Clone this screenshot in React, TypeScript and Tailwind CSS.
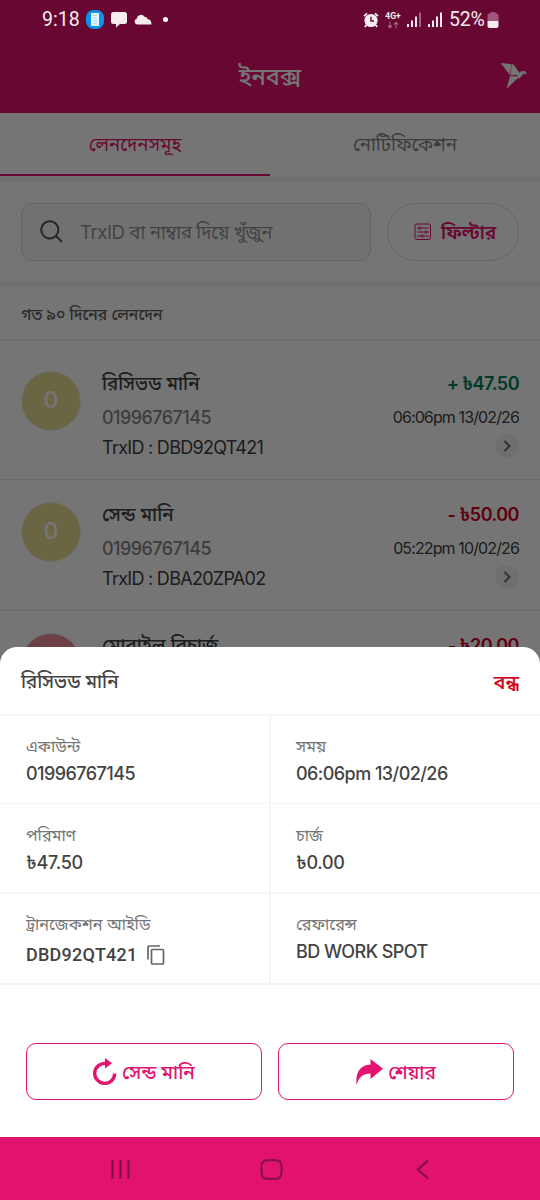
import type { ReactNode } from "react";

const transactions = [
  {
    title: "রিসিভড মানি",
    account: "01996767145",
    trxId: "DBD92QT421",
    amount: "+ ৳47.50",
    time: "06:06pm 13/02/26",
    initial: "0",
    avatar: "bg-[#e6df92]",
    color: "text-[#00805c]",
  },
  {
    title: "সেন্ড মানি",
    account: "01996767145",
    trxId: "DBA20ZPA02",
    amount: "- ৳50.00",
    time: "05:22pm 10/02/26",
    initial: "0",
    avatar: "bg-[#e6df92]",
    color: "text-[#d0021b]",
  },
];

function StatusBar() {
  return (
    <div className="absolute inset-x-0 top-0 z-20 flex h-[39px] items-center pr-[41px] pl-[42px] font-[Roboto] text-[19.5px] text-[#f5ecf0]">
      <span className="w-[38px] leading-[38px] whitespace-nowrap">9:18</span>
      <svg className="ml-[6px]" width="18" height="19" viewBox="0 0 18 19">
        <rect width="18" height="19" rx="7.5" fill="#0b93ee" />
        <path d="M5 3h8v13H5z" fill="#e8f6ff" />
        <path d="M7 5.500h4M7 8h4M7 10.500h4M7 13h4" stroke="#9ed4f8" />
      </svg>
      <svg className="ml-[7px]" width="16" height="16" viewBox="0 0 16 16" fill="currentColor">
        <path d="M2.500 0h11A2.500 2.500 0 0 1 16 2.500v7a2.500 2.500 0 0 1-2.500 2.500H9l-4 3.500V12H2.500A2.500 2.500 0 0 1 0 9.500v-7A2.500 2.500 0 0 1 2.500 0Z" />
      </svg>
      <svg className="ml-[7px]" width="18" height="11" viewBox="0 0 18 11" fill="currentColor">
        <path d="M3 10.500a3 3 0 0 1-.3-5.800A4.300 4.300 0 0 1 10.500 2.700a3.200 3.200 0 0 1 3.300 2.600c2.300.1 3.600 1.400 3.700 5.200Z" />
      </svg>
      <span className="ml-[11px] size-[5px] rounded-full bg-white" />

      <svg className="ml-auto" width="16" height="16" viewBox="0 0 16 16">
        <circle cx="8" cy="8.500" r="6.600" fill="currentColor" />
        <path d="M1 4.200 4 1.300M15 4.200l-3-2.900M3.300 13l-1.500 2M12.700 13l1.500 2" stroke="currentColor" strokeWidth="1.800" />
        <path d="M8 4.800v4.200h3" fill="none" stroke="#680a31" strokeWidth="1.400" />
      </svg>
      <div className="ml-[6px] flex w-[16px] flex-col items-center pt-[1px]">
        <span className="text-[8.5px] leading-[9px] font-bold">4G+</span>
        <svg width="12" height="8" viewBox="0 0 12 8" fill="none" stroke="#a06a80" strokeWidth="1.100">
          <path d="M3 .5v6M.8 4.500 3 6.800l2.200-2.300M9 7.500v-6M6.800 3.500 9 1.200l2.200 2.300" />
        </svg>
      </div>
      <svg className="ml-[6px]" width="15" height="15" viewBox="0 0 15 15" fill="currentColor">
        <path d="M0 12h2v3H0zM4 8.500h2V15H4zM8 4.500h2V15H8z" />
        <path d="M12 .5h2V15h-2z" opacity=".4" />
      </svg>
      <svg className="ml-[6px]" width="15" height="15" viewBox="0 0 15 15" fill="currentColor">
        <path d="M0 12h2v3H0zM4 8.500h2V15H4zM8 4.500h2V15H8zM12 .5h2V15h-2z" />
      </svg>
      <span className="ml-[6px] w-[38px] leading-[38px] tracking-[-0.2px]">52%</span>
      <svg width="12" height="16" viewBox="0 0 12 16">
        <path d="M3.500 0h5v1.500H10a1.500 1.500 0 0 1 1.500 1.500v6H.5V3A1.500 1.500 0 0 1 2 1.500h1.500z" fill="#a0587a" />
        <path d="M.5 9h11v5a2 2 0 0 1-2 2h-7a2 2 0 0 1-2-2z" fill="currentColor" />
      </svg>
    </div>
  );
}

function Header() {
  return (
    <header className="relative flex h-[113px] justify-center bg-[#e2136e] pt-[57px]">
      <h1 className="text-[23.5px] leading-[40px] font-medium text-white">ইনবক্স</h1>
      <svg className="absolute top-[62px] right-[12px]" width="28" height="28" viewBox="0 0 28 28" fill="#f8fff8">
        <path d="M.8 1l10.500 1.200L9.800 13z" />
        <path d="M11.600 2.200l2 .3 7 10-10.200 1z" />
        <path d="M10 14l11 .6-5 3.200L6.500 26.800z" />
        <path d="M16.500 13.200l4.500-4 4-.3 2 3.300-3.200-.6-4.500 4.800z" />
      </svg>
    </header>
  );
}

function Search() {
  return (
    <div className="flex h-[100px] gap-4 px-[21px] pt-[21px]">
      <div className="flex h-[58px] w-[350px] items-center rounded-[11px] border border-[#dadada] bg-[#f7f7f7] pb-[1px] pl-[18px]">
        <svg width="23" height="23" viewBox="0 0 23 23" fill="none" stroke="#505050" strokeWidth="2">
          <circle cx="9.800" cy="9.800" r="8.600" />
          <path d="m16 16 6 6" />
        </svg>
        <span className="ml-[17px] pt-[3px] text-[18.6px] tracking-[-0.45px] whitespace-nowrap text-[#939393]">
          TrxID বা নাম্বার দিয়ে খুঁজুন
        </span>
      </div>
      <div className="flex h-[58px] w-[132px] items-center rounded-full border border-[#dadada] pb-[1px] pl-[26px] text-[#e2136e]">
        <svg width="18" height="18" viewBox="0 0 18 18" fill="none" stroke="currentColor" strokeWidth="1">
          <rect x="1" y="1" width="15.500" height="15.500" rx="2" />
          <path d="M3 5h2M7 5h8M3 9h7.500M13 9h2M3 13h4M9.500 13H15" />
          <circle cx="5.800" cy="5" r="1.200" />
          <circle cx="11.800" cy="9" r="1.200" />
          <circle cx="8.200" cy="13" r="1.200" />
        </svg>
        <span className="ml-[9px] pt-[3px] text-[18.7px] font-semibold whitespace-nowrap">ফিল্টার</span>
      </div>
    </div>
  );
}

function Transaction({ item }: { item: (typeof transactions)[number] }) {
  return (
    <div className="flex h-[131px] border-b border-[#eaeaea] px-[21px]">
      <div
        className={`mt-[22px] flex size-[60px] items-center justify-center rounded-full border border-[#eee] pb-[1px] text-[23px] font-medium text-white ${item.avatar}`}
      >
        {item.initial}
      </div>
      <div className="ml-[21px] flex flex-1 flex-col pt-[20px] text-[18px]">
        <span className="text-[18.7px] leading-[30px] font-medium text-[#404040]">{item.title}</span>
        <span className="mt-[4px] leading-[30px] font-medium tracking-[-0.55px] text-[#858585]">{item.account}</span>
        <span className="leading-[30px] tracking-[-0.72px] text-[#404040]">TrxID : {item.trxId}</span>
      </div>
      <div className="flex flex-col items-end pt-[20px]">
        <span className={`text-[18px] leading-[30px] font-semibold tracking-[-0.5px] ${item.color}`}>{item.amount}</span>
        <span className="mt-[4px] text-[16px] leading-[28px] tracking-[-0.88px] text-[#404040]">{item.time}</span>
        <span className="mt-[3px] flex size-6 items-center justify-center rounded-full bg-[#f1f1f1]">
          <svg width="8" height="12" viewBox="0 0 8 12" fill="none" stroke="#707070" strokeWidth="2">
            <path d="m1.500 1 5 5-5 5" />
          </svg>
        </span>
      </div>
    </div>
  );
}

function Cell({ label, children }: { label: string; children: ReactNode }) {
  return (
    <div className="border-r-2 border-[#f5f5f5] pt-[18px] pl-[26px] even:border-r-0 even:pl-[25px]">
      <p className="text-[16.2px] leading-[24px] text-[#757575]">{label}</p>
      <div className="text-[18px] leading-[32px] font-medium tracking-[-0.55px] text-[#444]">{children}</div>
    </div>
  );
}

function DetailsSheet() {
  return (
    <section className="absolute inset-x-0 top-[647px] z-10 h-[490px] rounded-t-[17px] bg-white">
      <div className="flex h-[69px] items-center justify-between border-b-2 border-[#f5f5f5] px-[21px] pt-[4px] text-[18.7px] font-medium">
        <span className="text-[#444]">রিসিভড মানি</span>
        <span className="text-[19.5px] text-[#d0021b] [-webkit-text-stroke:0.2px]">বন্ধ</span>
      </div>
      <div className="grid h-[88px] grid-cols-[271px_1fr] border-b border-[#f5f5f5]">
        <Cell label="একাউন্ট">01996767145</Cell>
        <Cell label="সময়">06:06pm 13/02/26</Cell>
      </div>
      <div className="grid h-[90px] grid-cols-[271px_1fr] border-b-2 border-[#f5f5f5] pt-[1px]">
        <Cell label="পরিমাণ">
          <span className="tracking-[-0.3px]">৳47.50</span>
        </Cell>
        <Cell label="চার্জ">
          <span className="tracking-[-0.3px]">৳0.00</span>
        </Cell>
      </div>
      <div className="grid h-[91px] grid-cols-[271px_1fr] border-b-2 border-[#f5f5f5]">
        <Cell label="ট্রানজেকশন আইডি">
          <span className="flex items-center pt-[3px]">
            <span className="font-[Roboto] tracking-[0.25px]">DBD92QT421</span>
            <svg className="ml-[9px]" width="18" height="20" viewBox="0 0 18 20" fill="none" stroke="#666" strokeWidth="1.700">
              <rect x="4.500" y="4.500" width="12" height="14.500" rx="1" />
              <path d="M1 14.500V2a1 1 0 0 1 1-1h11" />
            </svg>
          </span>
        </Cell>
        <Cell label="রেফারেন্স">BD WORK SPOT</Cell>
      </div>
      <div className="mt-[58px] grid grid-cols-2 gap-4 px-[26px] text-[19px] font-medium text-[#e2136e]">
        <button className="flex h-[57px] items-center justify-center rounded-[10px] border-[1.5px] border-[#e2136e]">
          <svg width="24" height="27" viewBox="0 0 24 27">
            <path d="M13 5.500A10 10 0 1 0 21.700 15.500" fill="none" stroke="currentColor" strokeWidth="3.400" />
            <path d="m12 0 7 5.200-7 5.200z" fill="currentColor" />
          </svg>
          <span className="ml-[5px] pt-[4px]">সেন্ড মানি</span>
        </button>
        <button className="flex h-[57px] items-center justify-center rounded-[10px] border-[1.5px] border-[#e2136e]">
          <svg width="27" height="26" viewBox="0 0 27 26" fill="currentColor">
            <path d="M14.500 0 27 9.800 14.500 20v-5.500C7 14.500 3 18 .5 26-.5 14 3.500 6 14.500 5.500z" />
          </svg>
          <span className="ml-[5px] pt-[4px]">শেয়ার</span>
        </button>
      </div>
    </section>
  );
}

function NavBar() {
  return (
    <nav className="absolute inset-x-0 top-[1137px] z-10 flex h-[63px] items-center bg-[#e2136e] pt-[1px] pl-[110px] text-[#850f48]">
      <svg width="20" height="21" viewBox="0 0 20 21" fill="none" stroke="currentColor" strokeWidth="2.200">
        <path d="M2.500 1v19M10.500 1v19M18.500 1v19" />
      </svg>
      <svg className="ml-[130px]" width="23" height="21" viewBox="0 0 23 21" fill="none" stroke="currentColor" strokeWidth="2">
        <rect x="1.500" y="1.200" width="20" height="18.600" rx="5.500" />
      </svg>
      <svg className="ml-[133px]" width="13" height="21" viewBox="0 0 13 21" fill="none" stroke="currentColor" strokeWidth="2.200">
        <path d="m12 1.500-10 9 10 9" />
      </svg>
    </nav>
  );
}

export default function App() {
  return (
    <div className="relative h-[1200px] w-[540px] overflow-hidden bg-white font-[Inter,'Noto_Sans_Bengali','Noto_Sans',sans-serif]">
      <Header />
      <div className="grid h-[63px] grid-cols-2 text-center text-[18.6px] leading-[63px]">
        <span className="h-[63px] border-b-[2.5px] border-[#e2136e] text-[#e2136e]">লেনদেনসমূহ</span>
        <span className="text-[#858585]">নোটিফিকেশন</span>
      </div>
      <div className="h-[6px] bg-[#f5f5f5]" />
      <Search />
      <div className="h-[5px] bg-[#f5f5f5]" />
      <p className="h-[54px] border-b-2 border-[#f2f2f2] px-[21px] text-[15.7px] leading-[55px] font-medium text-[#606060]">
        গত ৯০ দিনের লেনদেন
      </p>
      <div className="pt-[8px]">
        {transactions.map((item) => (
          <Transaction key={item.trxId} item={item} />
        ))}
        {/* Last row is mostly covered by the sheet */}
        <div className="flex px-[21px]">
          <div className="mt-[22px] size-[60px] rounded-full border border-[#eee] bg-[#ed8f99]" />
          <span className="ml-[21px] flex-1 pt-[20px] text-[18.7px] leading-[30px] font-medium text-[#404040]">
            মোবাইল রিচার্জ
          </span>
          <span className="pt-[20px] text-[18px] leading-[30px] font-semibold tracking-[-0.5px] text-[#d0021b]">
            - ৳20.00
          </span>
        </div>
      </div>

      {/* Dim layer behind the details sheet */}
      <div className="absolute inset-0 bg-black/54" />
      <StatusBar />
      <DetailsSheet />
      <NavBar />
    </div>
  );
}
